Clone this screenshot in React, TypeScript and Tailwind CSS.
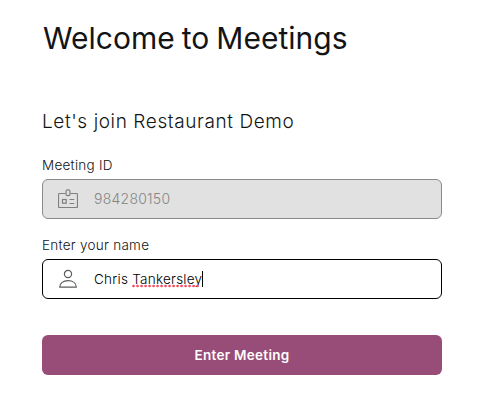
import type { ReactNode } from "react";

function BadgeIcon() {
  return (
    <svg width="20" height="20" viewBox="0 0 20 20" fill="none" stroke="#808080" strokeWidth="1.2" className="shrink-0">
      <path d="M7.500 4.500H1.500a1 1 0 0 0-1 1v12a1 1 0 0 0 1 1h17a1 1 0 0 0 1-1V5.500a1 1 0 0 0-1-1h-6" />
      <rect x="8" y="0.800" width="4" height="5.900" rx="1.700" />
      <rect x="4.500" y="10.500" width="3.700" height="3.700" />
      <path d="M11.500 10.500H16.300M11.500 14.500H16.300" />
    </svg>
  );
}

function PersonIcon() {
  return (
    <svg width="20" height="20" viewBox="0 0 20 20" fill="none" stroke="#5c5c5c" strokeWidth="1.2" className="shrink-0">
      <circle cx="10" cy="5" r="3.600" />
      <path d="M1.700 18.200c0-4.200 3.600-6.500 8.300-6.500s8.300 2.300 8.300 6.500z" strokeLinejoin="round" />
    </svg>
  );
}

function Field({ label, className, children }: { label: string; className: string; children: ReactNode }) {
  return (
    <div className="flex flex-col">
      <label className="flex h-5 items-center text-[13.5px] leading-[18px] tracking-[0.27px]">{label}</label>
      <div className={`mt-1 flex h-10 items-center rounded-md border pl-[15px] ${className}`}>{children}</div>
    </div>
  );
}

export default function App() {
  return (
    <main className="h-[415px] w-[486px] bg-white pt-[18px] pl-[42px] font-['Inter',sans-serif] font-light text-[#131415]">
      <div className="flex w-[400px] flex-col">
        <h1 className="h-10 pl-px text-[30px] leading-10 font-normal tracking-[0.02px] [word-spacing:-1.5px] whitespace-nowrap">Welcome to Meetings</h1>
        <h2 className="mt-[49px] h-[30px] text-[19px] leading-[30px] tracking-[0.6px] whitespace-nowrap">Let's join Restaurant Demo</h2>
        <div className="mt-[18px] flex flex-col gap-4">
          <Field label="Meeting ID" className="border-[#8a8a8a] bg-[#e1e1e1] text-[#858585]">
            <BadgeIcon />
            <span className="ml-4 pb-0.5 text-[14px] tracking-[0.25px]">984280150</span>
          </Field>
          <Field label="Enter your name" className="border-black bg-white text-[13.5px] leading-5 text-black">
            <PersonIcon />
            <span className="ml-4 whitespace-pre tracking-[0.25px]">Chris </span>
            <span className="relative tracking-[0.25px]">
              Tankersley
              <svg className="absolute top-[15px] left-0" width="71" height="4">
                <path d="M1.500 2H69" stroke="#f94a5e" strokeWidth="2.600" strokeLinecap="round" strokeDasharray="0.1 3.900" />
              </svg>
            </span>
            <span className="h-4 w-px bg-black" />
          </Field>
        </div>
        <button className="mt-9 h-10 rounded-md bg-[#984c78] text-[13.5px] leading-5 font-semibold tracking-[0.3px] text-white">Enter Meeting</button>
      </div>
    </main>
  );
}
